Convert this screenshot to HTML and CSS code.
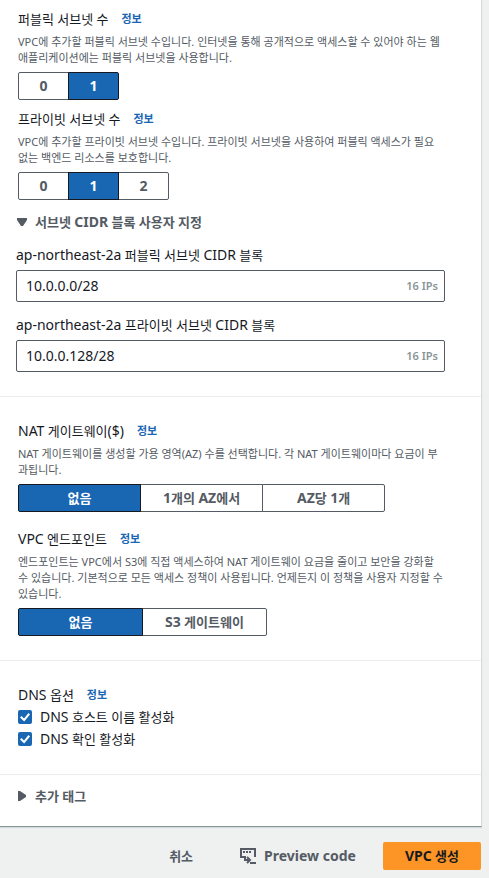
FILE: index.html
```html
<!DOCTYPE html>
<html lang="ko">
<head>
<meta charset="utf-8">
<meta name="viewport" content="width=device-width, initial-scale=1">
<title>VPC 생성</title>
<link rel="stylesheet" href="styles.css">
</head>
<body>
<form class="page">
  <main class="panel">
    <section class="section section-first">
      <div class="field">
        <div class="label">퍼블릭 서브넷 수 <a class="info" href="#">정보</a></div>
        <p class="desc">VPC에 추가할 퍼블릭 서브넷 수입니다. 인터넷을 통해 공개적으로 액세스할 수 있어야 하는 웹<br>애플리케이션에는 퍼블릭 서브넷을 사용합니다.</p>
        <div class="segments counts" role="group" aria-label="퍼블릭 서브넷 수">
          <button type="button">0</button>
          <button type="button" class="on" aria-pressed="true">1</button>
        </div>
      </div>
      <div class="field">
        <div class="label">프라이빗 서브넷 수 <a class="info" href="#">정보</a></div>
        <p class="desc">VPC에 추가할 프라이빗 서브넷 수입니다. 프라이빗 서브넷을 사용하여 퍼블릭 액세스가 필요<br>없는 백엔드 리소스를 보호합니다.</p>
        <div class="segments counts" role="group" aria-label="프라이빗 서브넷 수">
          <button type="button">0</button>
          <button type="button" class="on" aria-pressed="true">1</button>
          <button type="button">2</button>
        </div>
      </div>
      <details class="expander" open>
        <summary><svg class="caret" viewBox="0 0 10 10" aria-hidden="true"><path d="M0 1h10v2L6 9H4L0 3z"/></svg><span>서브넷 <span class="latin">CIDR</span> 블록 사용자 지정</span></summary>
        <div class="cidr">
          <label for="cidr-public"><span class="latin">ap-northeast-2a</span> 퍼블릭 서브넷 <span class="latin">CIDR</span> 블록</label>
          <div class="box"><input id="cidr-public" type="text" value="10.0.0.0/28"><span>16 IPs</span></div>
        </div>
        <div class="cidr">
          <label for="cidr-private"><span class="latin">ap-northeast-2a</span> 프라이빗 서브넷 <span class="latin">CIDR</span> 블록</label>
          <div class="box"><input id="cidr-private" type="text" value="10.0.0.128/28"><span>16 IPs</span></div>
        </div>
      </details>
    </section>

    <section class="section spaced">
      <div class="field">
        <div class="label"><span><span class="latin">NAT</span> 게이트웨이<span class="latin">($)</span></span> <a class="info" href="#">정보</a></div>
        <p class="desc">NAT 게이트웨이를 생성할 가용 영역(AZ) 수를 선택합니다. 각 NAT 게이트웨이마다 요금이 부<br>과됩니다.</p>
        <div class="segments" role="group" aria-label="NAT 게이트웨이">
          <button type="button" class="on" aria-pressed="true">없음</button>
          <button type="button"><span class="latin">1</span>개의 <span class="latin">AZ</span>에서</button>
          <button type="button"><span class="latin">AZ</span>당 <span class="latin">1</span>개</button>
        </div>
      </div>
      <div class="field">
        <div class="label"><span><span class="latin">VPC</span> 엔드포인트</span> <a class="info" href="#">정보</a></div>
        <p class="desc">엔드포인트는 VPC에서 S3에 직접 액세스하여 NAT 게이트웨이 요금을 줄이고 보안을 강화할<br>수 있습니다. 기본적으로 모든 액세스 정책이 사용됩니다. 언제든지 이 정책을 사용자 지정할 수<br>있습니다.</p>
        <div class="segments" role="group" aria-label="VPC 엔드포인트">
          <button type="button" class="on" aria-pressed="true">없음</button>
          <button type="button"><span class="latin">S3</span> 게이트웨이</button>
        </div>
      </div>
    </section>

    <section class="section">
      <div class="label"><span><span class="latin">DNS</span> 옵션</span> <a class="info" href="#">정보</a></div>
      <label class="check"><input type="checkbox" checked><span><span class="latin">DNS</span> 호스트 이름 활성화</span></label>
      <label class="check"><input type="checkbox" checked><span><span class="latin">DNS</span> 확인 활성화</span></label>
    </section>

    <section class="section section-tags">
      <details class="expander">
        <summary><svg class="caret" viewBox="0 0 10 10" aria-hidden="true"><path d="M1 0h2l6 4v2l-6 4H1z"/></svg>추가 태그</summary>
      </details>
    </section>
  </main>

  <footer class="actions">
    <button type="button" class="link">취소</button>
    <button type="button" class="link preview"><svg viewBox="0 0 16 16" aria-hidden="true"><path class="line" d="M5 9H1V1h14v8M5 8v4h5M7 9l3 3-3 3M10 15h6"/><path d="M3 3h2v2H3zM6 3h2v2H6zM9 3h2v2H9z"/></svg>Preview code</button>
    <button type="submit" class="primary"><span class="latin">VPC</span> 생성</button>
  </footer>
</form>
</body>
</html>
```
FILE: styles.css
```css
* { box-sizing: border-box; }

body {
  margin: 0;
  background: #eff1f1;
  color: #16191f;
  font: 13px/22px "Noto Sans", "Noto Sans CJK KR", sans-serif;
}

button, input { font: inherit; color: inherit; }

/* Latin runs are set one size up to balance with the Hangul */
.latin { font-size: 14px; line-height: 1; }

.page { padding-right: 7px; }

.panel {
  background: #fff;
  border-right: 1px solid #d5dbdb;
  border-bottom: 1px solid #879596;
  box-shadow: 0 1px 1px #d5dbdb;
}

.section {
  padding: 23px 24px 24px 18px;
  border-top: 1px solid #eaeded;
}
.section-first { padding-top: 8px; border-top: 0; }
.section-tags { padding: 10px 18px 19px; }

.field { margin-bottom: 8px; }
.spaced .field { margin-bottom: 16px; }
.spaced .field:last-child { margin-bottom: 0; }

.label { display: flex; align-items: center; gap: 13px; }

.info {
  color: #1966b3;
  font-size: 11px;
  font-weight: 700;
  text-decoration: none;
}

.desc {
  margin: 4px 0 6px;
  color: #545b64;
  font-size: 11px;
  line-height: 16px;
  white-space: nowrap;
}

.segments {
  display: grid;
  grid-auto-flow: column;
  grid-auto-columns: 1fr;
  width: max-content;
  padding-left: 1px;
}
.segments button {
  height: 28px;
  margin-left: -1px;
  padding: 0 22px;
  border: 1px solid #545b64;
  background: #fff;
  color: #545b64;
  font-weight: 700;
}
.segments.counts button { padding: 0 20px; min-width: 51px; font-size: 14px; }
.segments button:first-child { border-radius: 2px 0 0 2px; }
.segments button:last-child { border-radius: 0 2px 2px 0; }
.segments .on {
  z-index: 1;
  border-color: #16191f;
  background: #1966b3;
  color: #fff;
}

.expander { margin: 11px 12px 0 -2px; }
.section-tags .expander { margin: 0; }
.expander summary {
  display: flex;
  align-items: center;
  gap: 8px;
  list-style: none;
  color: #545b64;
  font-weight: 700;
}
.caret { width: 10px; height: 10px; fill: #545b64; }
.section-first .caret { margin-left: 1px; }
.section-tags .caret { margin: 0 0 0 -1px; }

.cidr { display: grid; gap: 4px; margin-top: 11px; }
.cidr + .cidr { margin-top: 12px; }
.box {
  display: flex;
  align-items: center;
  height: 32px;
  padding: 0 6px 0 9px;
  border: 1px solid #545b64;
  border-radius: 2px;
}
.box input {
  flex: 1;
  min-width: 0;
  padding: 0;
  border: 0;
  outline: 0;
  background: none;
  font-size: 14px;
}
.box span { color: #879596; font-size: 11px; font-weight: 600; }

.check { display: flex; align-items: center; gap: 8px; }
.check input {
  appearance: none;
  width: 14px;
  height: 14px;
  margin: 0;
  border-radius: 2px;
  background: #1966b3;
  display: grid;
  place-items: center;
}
.check input::before {
  content: "";
  width: 10px;
  height: 10px;
  background: #fff;
  clip-path: path("M0 5.5 1.5 4 4 6.5 8.5 1 10 2.5 4.2 9.5z");
}

.actions {
  display: flex;
  justify-content: flex-end;
  align-items: center;
  padding: 15px 1px 8px 0;
}
.actions button {
  height: 28px;
  border: 0;
  border-radius: 2px;
  padding: 0 22px;
  background: none;
  color: #545b64;
  font-weight: 700;
}
.actions .link { margin-right: 3px; }
.actions .preview {
  display: flex;
  align-items: center;
  gap: 8px;
  margin-right: 5px;
  font-size: 14px;
}
.preview svg { width: 16px; height: 16px; fill: #545b64; }
.preview .line { fill: none; stroke: #545b64; stroke-width: 2; }
.actions .primary { background: #fc9426; color: #16191f; }
```
